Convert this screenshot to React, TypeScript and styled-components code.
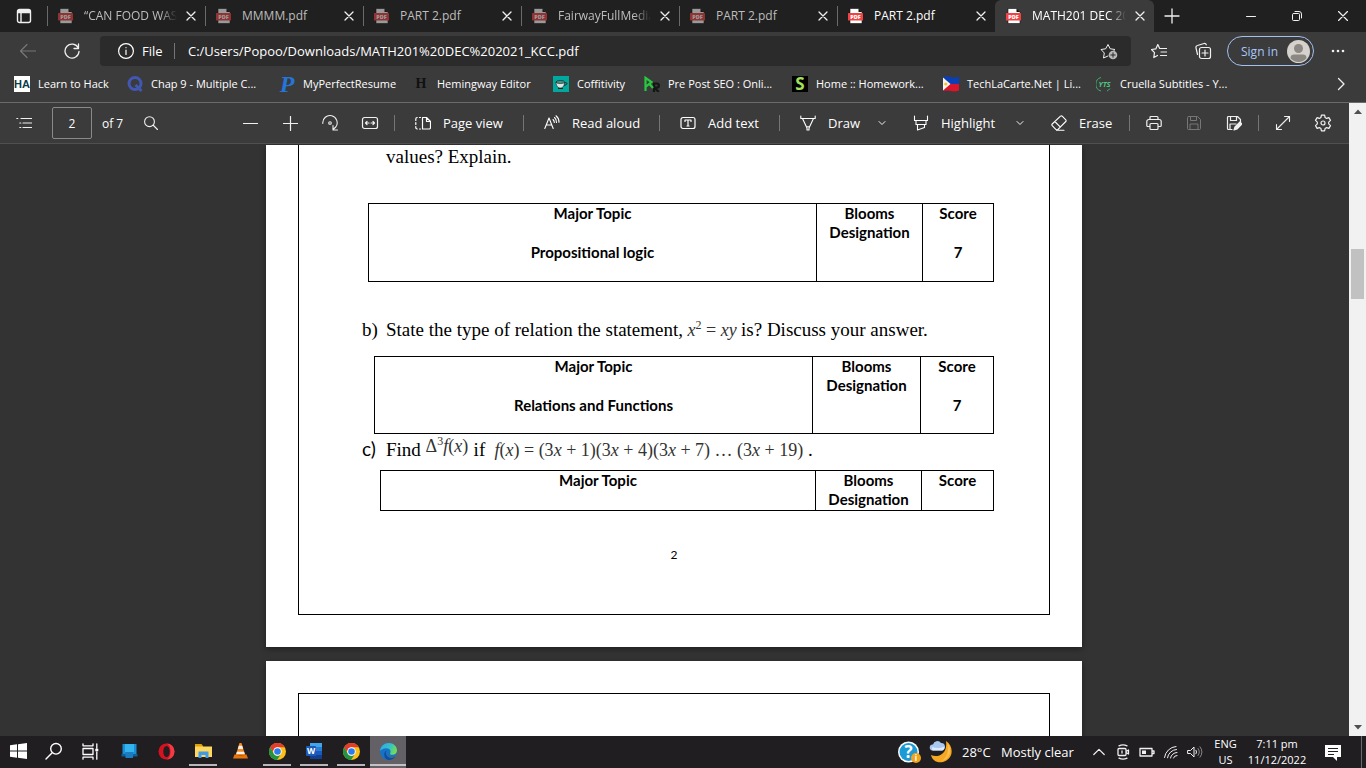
import React from 'react';
import styled, { createGlobalStyle, css } from 'styled-components';

const GlobalStyle = createGlobalStyle`
  * { box-sizing: border-box; }
  html, body, #root { height: 100%; }
  body { margin: 0; overflow: hidden; background: #333; font-family: "Open Sans", sans-serif; color: #fff; }
  button, input { font: inherit; color: inherit; }
  button { border: 0; padding: 0; background: none; }
  a { color: inherit; text-decoration: none; }
  svg { display: block; flex: none; }
`;

/* ---------- layout ---------- */

const Window = styled.div`
  display: flex;
  flex-direction: column;
  height: 100%;
  min-height: 480px;
`;

const TabStrip = styled.header`
  display: flex;
  flex: none;
  height: 32px;
  background: #202020;
`;

const IconButton = styled.button<{ $w?: number; $dim?: boolean }>`
  display: flex;
  flex: none;
  align-items: center;
  justify-content: center;
  width: ${(p) => p.$w ?? 40}px;
  align-self: stretch;
  color: ${(p) => (p.$dim ? '#777' : '#f0f0f0')};
`;

const Tabs = styled.nav`
  display: flex;
  min-width: 0;
`;

const Tab = styled.div<{ $active?: boolean; $bright?: boolean }>`
  display: flex;
  align-items: center;
  flex: 0 1 auto;
  width: ${(p) => (p.$active ? 159 : 158)}px;
  min-width: 0;
  color: ${(p) => (p.$active || p.$bright ? '#fff' : '#bdbdbd')};
  ${(p) => p.$active && css`
    background: #3b3b3b;
    border-radius: 6px 6px 0 0;
  `}
`;

const TabEdge = styled.span<{ $hidden?: boolean }>`
  flex: none;
  width: 1px;
  height: 20px;
  margin-right: 10px;
  background: ${(p) => (p.$hidden ? 'transparent' : '#6a6a6a')};
`;

const Favicon = styled.span<{ $faded?: boolean }>`
  flex: none;
  margin-right: 10px;
  opacity: ${(p) => (p.$faded ? 0.55 : 1)};
`;

const TabTitle = styled.span<{ $fade?: boolean }>`
  flex: 1;
  min-width: 0;
  overflow: hidden;
  white-space: nowrap;
  font-size: 12px;
  line-height: 18px;
  ${(p) => p.$fade && css`
    mask-image: linear-gradient(to right, #000 82%, transparent);
  `}
`;

const WindowControls = styled.div`
  display: flex;
  margin-left: auto;
`;

const AddressRow = styled.div`
  display: flex;
  align-items: center;
  flex: none;
  gap: 4px;
  height: 38px;
  padding: 0 8px;
  background: #3b3b3b;
`;

const AddressField = styled.div`
  display: flex;
  align-items: center;
  flex: 1;
  min-width: 0;
  height: 30px;
  margin: 0 4px;
  padding: 0 2px 0 18px;
  border-radius: 4px;
  background: #2b2b2b;
  font-size: 13px;
`;

const Scheme = styled.label`
  flex: none;
  width: 32px;
  margin-left: 8px;
  line-height: 18px;
`;

const UrlInput = styled.input`
  flex: 1;
  min-width: 0;
  height: 18px;
  margin-right: 8px;
  padding: 0 0 0 13px;
  border: 0;
  background: none;
  outline: 0;
`;

const Rule = styled.span<{ $m?: number }>`
  flex: none;
  width: 1px;
  height: 16px;
  margin: 0 ${(p) => p.$m ?? 0}px;
  background: #757575;
`;

const SignIn = styled.button`
  display: flex;
  align-items: center;
  justify-content: space-between;
  flex: none;
  width: 87px;
  height: 30px;
  padding: 0 3px 0 13px;
  border: 1px solid #a3c1f0;
  border-radius: 15px;
  color: #a8c7fa;
  font-size: 12px;
`;

const Bookmarks = styled.nav`
  display: flex;
  align-items: center;
  flex: none;
  height: 33px;
  padding: 0 5px 4px 14px;
  border-bottom: 1px solid #6b6b6b;
  background: #3b3b3b;
`;

const Bookmark = styled.a<{ $w: number }>`
  display: flex;
  align-items: center;
  gap: 8px;
  flex: 0 1 ${(p) => p.$w}px;
  min-width: 0;
  overflow: hidden;
  white-space: nowrap;
  font-size: 11px;
  line-height: 16px;
`;

const More = styled.div`
  display: flex;
  margin-left: auto;
  height: 28px;
`;

const Content = styled.div`
  display: flex;
  flex: 1;
  min-height: 0;
`;

const Reader = styled.div`
  display: flex;
  flex-direction: column;
  flex: 1;
  min-width: 0;
`;

const PdfBar = styled.div`
  display: flex;
  align-items: center;
  flex: none;
  height: 41px;
  padding-left: 4px;
  border-bottom: 1px solid #4f4f4f;
  background: #3b3b3b;
  font-size: 13px;
`;

const PageBox = styled.input`
  width: 40px;
  height: 32px;
  margin: 0 10px 0 8px;
  padding: 0;
  border: 1px solid #8a8a8a;
  border-radius: 2px;
  background: transparent;
  text-align: center;
  font-size: 12px;
`;

const PageTotal = styled.label`
  width: 29px;
  white-space: nowrap;
  font-size: 12px;
`;

const Gap = styled.span`
  flex: 0 1 59px;
`;

const Tool = styled.button<{ $w: number; $split?: boolean }>`
  display: flex;
  align-items: center;
  flex: none;
  gap: 12px;
  height: 32px;
  padding: 0 ${(p) => (p.$split ? 8 : 14)}px 0 16px;
  white-space: nowrap;
  text-align: left;

  span { width: ${(p) => p.$w}px; }
`;

const Viewer = styled.main`
  flex: 1;
  min-height: 0;
  overflow: hidden;
  padding-right: 1px;
  background: #333;
  color: #000;
`;

const Sheet = styled.article<{ $next?: boolean }>`
  width: 100%;
  max-width: 816px;
  margin: 0 auto 14px;
  padding: ${(p) => (p.$next ? '32px' : '0')} 32px 32px;
  background: #fff;
  box-shadow: 0 2px 6px rgba(0, 0, 0, 0.4);
`;

const Frame = styled.div<{ $next?: boolean }>`
  padding-bottom: 49px;
  border: 1px solid #000;
  ${(p) => (p.$next ? css`min-height: 960px;` : css`border-top: 0;`)}
`;

const Para = styled.p<{ $top: number }>`
  display: flex;
  align-items: baseline;
  height: 24px;
  margin: ${(p) => p.$top}px 0 0;
  padding-left: 63px;
  white-space: pre;
  font: 19px/24px "Liberation Serif", serif;
`;

const Marker = styled.span<{ $sans?: boolean }>`
  flex: none;
  width: 24px;
  ${(p) => p.$sans && css`font-family: Lato, sans-serif;`}
`;

const Formula = styled.span<{ $w: number; $size: number; $raised?: boolean }>`
  flex: none;
  width: ${(p) => p.$w}px;
  color: #333;
  font-size: ${(p) => p.$size}px;
  ${(p) => p.$raised && css`
    position: relative;
    bottom: 4px;
  `}

  sup { font-size: 12px; line-height: 0; }
`;

const Grid = styled.table<{ $top: number; $left: number }>`
  width: calc(100% - ${(p) => p.$left + 55}px);
  margin: ${(p) => p.$top}px 55px 0 ${(p) => p.$left}px;
  border-collapse: collapse;
  border: 1px solid #000;
  table-layout: fixed;
  font: bold 15px/19px Lato, sans-serif;

  th, td {
    padding: 0;
    border-left: 1px solid #000;
    text-align: center;
    vertical-align: top;
    font-weight: bold;
  }
  th { padding-bottom: 1px; }
  td { height: 38px; }
`;

const Col = styled.col<{ $w?: number }>`
  width: ${(p) => (p.$w ? `${p.$w}px` : 'auto')};
`;

const PageNumber = styled.p`
  margin: 34px 0 0;
  text-align: center;
  font: 12px/20px Lato, sans-serif;
`;

const ScrollBar = styled.div`
  display: flex;
  flex-direction: column;
  align-items: center;
  flex: none;
  width: 17px;
  background: #f1f1f1;
`;

const Arrow = styled.span<{ $down?: boolean }>`
  display: grid;
  place-items: center;
  height: 17px;
  ${(p) => p.$down && css`margin-top: auto; transform: rotate(180deg);`}
`;

const Thumb = styled.div`
  width: 13px;
  height: 50px;
  margin-top: 129px;
  background: #c1c1c1;
`;

const TaskBar = styled.footer`
  display: flex;
  flex: none;
  height: 32px;
  background: #211e22;
`;

const Pinned = styled.div`
  display: flex;
  gap: 1px;
  margin-left: 3px;
`;

const TaskButton = styled.button<{ $open?: boolean; $active?: boolean }>`
  display: flex;
  align-items: center;
  justify-content: center;
  width: 36px;
  height: 32px;
  padding-bottom: 2px;
  color: #fff;
  ${(p) => p.$open && css`
    background: linear-gradient(#b9b5ba, #b9b5ba) center bottom 2px / 28px 2px no-repeat;
  `}
  ${(p) => p.$active && css`
    background: linear-gradient(#c4c0c5, #c4c0c5) center bottom 2px / 36px 2px no-repeat, #636066;
  `}
`;

const Tray = styled.div`
  display: flex;
  align-items: center;
  margin-left: auto;
`;

const Weather = styled.button`
  display: flex;
  align-items: center;
  height: 32px;
  font-size: 13px;
  white-space: nowrap;
  text-align: left;
`;

const Temp = styled.span`
  width: 39px;
  margin-left: 9px;
`;

const Sky = styled.span`
  width: 86px;
`;

const TwoLines = styled.button<{ $w: number }>`
  width: ${(p) => p.$w}px;
  text-align: center;
  font-size: 11px;
  line-height: 16px;
  white-space: nowrap;
`;

const ShowDesktop = styled.button`
  width: 5px;
  height: 32px;
  margin-left: 5px;
  border-left: 1px solid #6d6a6e;
`;

/* ---------- icons ---------- */

type IconProps = { d: string; size?: number; sw?: number; children?: React.ReactNode };

const Icon = ({ d, size = 16, sw = 1, children }: IconProps) => (
  <svg width={size} height={size} viewBox={`0 0 ${size} ${size}`} fill="none" stroke="currentColor" strokeWidth={sw} strokeLinecap="round" strokeLinejoin="round" aria-hidden="true">
    <path d={d} />
    {children}
  </svg>
);

const CloseX = () => <Icon size={10} sw={1.3} d="M1 1l8 8M9 1L1 9" />;
const ChevronDown = () => <Icon size={8} d="M1 2.5l3 3 3-3" />;

const PdfIcon = () => (
  <svg width="16" height="16" viewBox="0 0 16 16" aria-hidden="true">
    <path d="M2 .5h8.5L14 4v11.5H2z" fill="#fff" stroke="#111" strokeWidth=".6" />
    <path d="M10.5.5V4H14z" fill="#111" />
    <rect x="0" y="5" width="15" height="7.5" rx=".6" fill="#f04343" />
    <text x="7.5" y="10.8" textAnchor="middle" fontFamily="Open Sans" fontWeight="800" fontSize="5.5" fill="#fff">PDF</text>
  </svg>
);

type GlyphProps = { text: string; bg?: string; color: string; font?: string; size: number; italic?: boolean; y?: number };

const Glyph = ({ text, bg, color, font = 'Open Sans', size, italic, y = 12 }: GlyphProps) => (
  <svg width="16" height="16" viewBox="0 0 16 16" overflow="visible" aria-hidden="true">
    {bg && <rect width="16" height="16" fill={bg} />}
    <text x="8" y={y} textAnchor="middle" fontFamily={font} fontWeight="bold" fontStyle={italic ? 'italic' : 'normal'} fontSize={size} fill={color}>{text}</text>
  </svg>
);

const QuizIcon = () => (
  <svg width="16" height="16" viewBox="0 0 16 16" fill="none" stroke="#4257b2" strokeWidth="3" aria-hidden="true">
    <circle cx="8" cy="7.5" r="6" />
    <path d="M8.500 9l6 6" />
  </svg>
);

const CupIcon = () => (
  <svg width="16" height="16" viewBox="0 0 16 16" aria-hidden="true">
    <rect width="16" height="16" fill="#00a99d" />
    <path d="M3 6c0 4 2 6 4.500 6s4-2.500 4.200-6z" fill="#d9e8e6" stroke="#222" strokeWidth=".7" />
    <ellipse cx="7.300" cy="6" rx="4.300" ry="1.400" fill="#3aa79b" stroke="#222" strokeWidth=".8" />
    <path d="M11.500 7c2-1 3 .5 2 1.400-.6.7-1.600.8-2.400.8M5 12.500h5" fill="none" stroke="#222" />
  </svg>
);

const SeoIcon = () => (
  <svg width="16" height="16" viewBox="0 0 16 16" fill="none" strokeWidth="2.2" aria-hidden="true">
    <path d="M1.500 15V1.800L7.500 6 2 10.500" stroke="#27c93f" />
    <path d="M10 16V7.500h2.800a2 2 0 010 4.200H10.500l4.300 4.300" stroke="#151515" />
    <path d="M5.500 8l3.500 4" stroke="#27c93f" />
  </svg>
);

const FlagIcon = () => (
  <svg width="16" height="16" viewBox="0 0 16 16" aria-hidden="true">
    <path d="M0 1q4-1.500 8 0t8-.5V8H0z" fill="#0b3fb5" />
    <path d="M0 8h16v6.500q-4 1.500-8 .5t-8 0z" fill="#d9142b" />
    <path d="M0 1.500L7.500 8 0 14.500z" fill="#f5f5f5" />
    <circle cx="2.800" cy="8" r="1.600" fill="#f6c318" />
  </svg>
);

const YtsIcon = () => (
  <svg width="16" height="16" viewBox="0 0 16 16" aria-hidden="true">
    <path d="M5 1.500A7 7 0 005 15M11 15a7 7 0 003-2.500" fill="none" stroke="#3fae6a" />
    <text x="8.500" y="10.500" textAnchor="middle" fontFamily="Open Sans" fontWeight="bold" fontStyle="italic" fontSize="7.500" fill="#4fc47e">YTS</text>
  </svg>
);

const Avatar = () => (
  <svg width="23" height="23" viewBox="0 0 23 23" aria-hidden="true">
    <circle cx="11.500" cy="11.500" r="11.500" fill="#d5d1cd" />
    <circle cx="11.500" cy="8.500" r="4.500" fill="#8b8783" />
    <path d="M3.500 18.200c0-2.600 1.500-3.700 3.500-3.700h9c2 0 3.500 1.100 3.500 3.700a10.500 10.500 0 01-16 0z" fill="#8b8783" />
  </svg>
);

const ChromeIcon = () => (
  <svg width="17" height="17" viewBox="0 0 16 16" aria-hidden="true">
    <circle cx="8" cy="8" r="8" fill="#fbc116" />
    <path d="M1.070 4A8 8 0 0114.930 4H8a4 4 0 00-3.460 6z" fill="#e33b2e" />
    <path d="M1.070 4a8 8 0 006.530 12l3.860-6A4 4 0 014.540 10z" fill="#229342" />
    <circle cx="8" cy="8" r="4" fill="#fff" />
    <circle cx="8" cy="8" r="3.100" fill="#2a7cf0" />
  </svg>
);

const EdgeIcon = () => (
  <svg width="17" height="17" viewBox="0 0 16 16" aria-hidden="true">
    <defs>
      <linearGradient id="edgeTop" x1="0" y1="0" x2="1" y2=".4">
        <stop offset="0" stopColor="#2fa7e8" />
        <stop offset=".6" stopColor="#35c1c9" />
        <stop offset="1" stopColor="#6ddc5a" />
      </linearGradient>
    </defs>
    <circle cx="8" cy="8" r="8" fill="#1673c7" />
    <path d="M0 7.500C.5 3 4 0 8.200 0 12.800 0 16 3.200 16 7c0 2.600-2 4-4.200 4-1.700 0-2.500-.6-2.300-1.200.9-1.100.7-4.800-3.500-4.800C3 5 .8 6.500 0 7.500z" fill="url(#edgeTop)" />
    <path d="M6.500 6.800C5 8 5 12.500 9 13.800c2 .6 4 .2 5.500-.8-1.500 2.300-4.600 3.400-7.300 2.800C3 14.500 3 8 6.500 6.800z" fill="#0f4f9e" />
    <path d="M7.500 7.500c-1.500 2 .5 5 4 5 1.700 0 3-.5 3.800-1.200L16 13l-3 0c-4 1.500-7.500-2.500-5.500-5.500z" fill="#636066" />
  </svg>
);

const WordIcon = () => (
  <svg width="17" height="16" viewBox="0 0 17 16" aria-hidden="true">
    <path d="M4 0h12v4H4z" fill="#41a5ee" />
    <path d="M4 4h12v4H4z" fill="#2b7cd3" />
    <path d="M4 8h12v4H4z" fill="#185abd" />
    <path d="M4 12h12v4H4z" fill="#103f91" />
    <rect y="3" width="10" height="10" rx=".8" fill="#1c5ab8" />
    <text x="5" y="11" textAnchor="middle" fontFamily="Open Sans" fontWeight="bold" fontSize="8.500" fill="#fff">W</text>
  </svg>
);

const FolderIcon = () => (
  <svg width="17" height="16" viewBox="0 0 17 16" aria-hidden="true">
    <path d="M0 1h6.500L8 3v3H0z" fill="#e0a100" />
    <path d="M0 3.500h17V14H0z" fill="#ffd75e" />
    <path d="M3.500 15V8.500h10V15h-3v-3h-4v3z" fill="#3f9be8" />
  </svg>
);

const VlcIcon = () => (
  <svg width="15" height="16" viewBox="0 0 15 16" aria-hidden="true">
    <path d="M6.500 0h2l3.800 12.500H2.700z" fill="#f58a1f" />
    <path d="M5.800 2.800h3.400l1 3.200H4.800zM3.900 8.800h7.200l.7 2.200H3.200z" fill="#f1f1f1" />
    <path d="M1.500 11.500h1.200c1 1.500 8.600 1.500 9.600 0h1.200L15 15.500H0z" fill="#e8740c" />
  </svg>
);

const OperaIcon = () => (
  <svg width="17" height="17" viewBox="0 0 17 17" aria-hidden="true">
    <ellipse cx="8.500" cy="8.500" rx="8" ry="8" fill="#d3131f" />
    <path d="M8.500.5a8 8 0 010 16c3-1 4-4.500 4-8s-1-7-4-8z" fill="#f23b45" />
    <ellipse cx="8.500" cy="8.500" rx="3.200" ry="5.500" fill="#211e22" />
  </svg>
);

const PcIcon = () => (
  <svg width="17" height="16" viewBox="0 0 17 16" aria-hidden="true">
    <path d="M1.500 1h14v11h-14z" fill="#1a8fd6" />
    <path d="M4 1h9v8H4z" fill="#35b3ee" />
    <path d="M.5 11h5v2.500h-5zM11.500 11h5v2.500h-5z" fill="#0f5f9c" />
    <path d="M4.500 9h7.500v6H4.500z" fill="#1b7cc0" />
  </svg>
);

const HelpIcon = () => (
  <svg width="23" height="23" viewBox="0 0 23 23" aria-hidden="true">
    <circle cx="10.500" cy="11" r="10.500" fill="#fff" />
    <circle cx="10.500" cy="11" r="9" fill="#1b9ad6" />
    <text x="10.500" y="17" textAnchor="middle" fontFamily="Open Sans" fontWeight="bold" fontSize="17" fill="#fff">?</text>
    <circle cx="18" cy="17" r="5" fill="#f2a31b" />
    <text x="18" y="20" textAnchor="middle" fontFamily="Open Sans" fontWeight="bold" fontSize="8" fill="#fff">i</text>
  </svg>
);

const MoonIcon = () => (
  <svg width="24" height="24" viewBox="0 0 24 24" aria-hidden="true">
    <path d="M17 1c8 5 8 18-3 21C8 23.500 3 20 2 15c6 3 17 0 15-14z" fill="#f7a823" />
    <path d="M18.500 3c5 6 3 16-6 18 5-3 8-9 6-18z" fill="#ffc04d" />
    <path d="M3.500 10.500a3 3 0 01.5-6 4.500 4.500 0 018-1.500 3.800 3.800 0 011 7.500z" fill="#a9c8f0" />
    <path d="M3.500 10.500a3 3 0 010-3.500c3 1.500 7 1.500 12-.5 0 2-1 4-2.500 4z" fill="#dfeafa" />
  </svg>
);

const StartIcon = () => (
  <svg width="17" height="16" viewBox="0 0 17 16" fill="#fff" aria-hidden="true">
    <path d="M0 2.300l7-1v6.200H0zM8 1.200L17 0v7.500H8zM0 8.500h7v6.200l-7-1zM8 8.500h9V16l-9-1.200z" />
  </svg>
);

/* ---------- data ---------- */

const tabs = [
  { title: '“CAN FOOD WAST', fade: true },
  { title: 'MMMM.pdf' },
  { title: 'PART 2.pdf' },
  { title: 'FairwayFullMedia', fade: true },
  { title: 'PART 2.pdf' },
  { title: 'PART 2.pdf', bright: true },
  { title: 'MATH201 DEC 20', fade: true, active: true },
];

const bookmarks = [
  { label: 'Learn to Hack', w: 113, icon: <Glyph text="HA" bg="#fff" color="#0b3c49" size={11} font="Liberation Sans" /> },
  { label: 'Chap 9 - Multiple C...', w: 152, icon: <QuizIcon /> },
  { label: 'MyPerfectResume', w: 134, icon: <Glyph text="P" color="#2376d8" size={24} font="Liberation Serif" italic y={16} /> },
  { label: 'Hemingway Editor', w: 140, icon: <Glyph text="H" color="#111" size={14} font="Liberation Serif" y={12} /> },
  { label: 'Coffitivity', w: 91, icon: <CupIcon /> },
  { label: 'Pre Post SEO : Onli...', w: 148, icon: <SeoIcon /> },
  { label: 'Home :: Homework...', w: 151, icon: <Glyph text="S" bg="#000" color="#a4e05a" size={17} y={14} /> },
  { label: 'TechLaCarte.Net | Li...', w: 153, icon: <FlagIcon /> },
  { label: 'Cruella Subtitles - Y...', w: 153, icon: <YtsIcon /> },
];

const TopicTable = ({ top, left, cols, topic, score }: { top: number; left: number; cols: [number, number]; topic?: string; score?: string }) => (
  <Grid $top={top} $left={left}>
    <colgroup>
      <Col />
      <Col $w={cols[0]} />
      <Col $w={cols[1]} />
    </colgroup>
    <thead>
      <tr>
        <th scope="col">Major Topic</th>
        <th scope="col">Blooms<br />Designation</th>
        <th scope="col">Score</th>
      </tr>
    </thead>
    {topic && (
      <tbody>
        <tr>
          <td>{topic}</td>
          <td />
          <td>{score}</td>
        </tr>
      </tbody>
    )}
  </Grid>
);

export default function App() {
  return (
    <Window>
      <GlobalStyle />
      <TabStrip>
        <IconButton $w={47} aria-label="Tab actions">
          <Icon sw={1.4} d="M3.500 1.500h9a2 2 0 012 2v9a2 2 0 01-2 2h-9a2 2 0 01-2-2v-9a2 2 0 012-2zM2 4.500h12M5 5v9"><path d="M2.500 3h11" strokeWidth="2" /></Icon>
        </IconButton>
        <Tabs>
          {tabs.map((t, i) => (
            <Tab key={i} $active={t.active} $bright={t.bright}>
              <TabEdge $hidden={t.active} />
              <Favicon $faded={!t.active && !t.bright}><PdfIcon /></Favicon>
              <TabTitle $fade={t.fade}>{t.title}</TabTitle>
              <IconButton $w={28} aria-label="Close tab"><CloseX /></IconButton>
            </Tab>
          ))}
        </Tabs>
        <IconButton $w={36} aria-label="New tab"><Icon sw={1.3} d="M8 1v14M1 8h14" /></IconButton>
        <WindowControls>
          <IconButton $w={46} aria-label="Minimize"><Icon size={10} d="M0.500 5.500h9" /></IconButton>
          <IconButton $w={46} aria-label="Restore"><Icon size={10} d="M2 2.500h4.500a1 1 0 011 1V8.500a1 1 0 01-1 1H1.500a1 1 0 01-1-1V3.500a1 1 0 011-1zM3 .5h4a2.500 2.500 0 012.500 2.500v4" /></IconButton>
          <IconButton $w={46} aria-label="Close"><Icon size={10} sw={1.2} d="M0.500 0.500l9 9M9.500 .5l-9 9" /></IconButton>
        </WindowControls>
      </TabStrip>

      <AddressRow>
        <IconButton $dim aria-label="Back"><Icon sw={1.2} d="M15.500 8H.5M7 1.500L.5 8 7 14.500" /></IconButton>
        <IconButton aria-label="Refresh"><Icon sw={1.3} d="M14.300 5A7 7 0 1015 8.500M14.500 1v4.500H10" /></IconButton>
        <AddressField>
          <Icon sw={1.2} d="M8 .6a7.400 7.400 0 110 14.800A7.400 7.400 0 018 .6zM8 7v4.500M8 4.500v.2" />
          <Scheme htmlFor="url">File</Scheme>
          <Rule />
          <UrlInput id="url" defaultValue="C:/Users/Popoo/Downloads/MATH201%20DEC%202021_KCC.pdf" />
          <IconButton aria-label="Add to favorites">
            <Icon size={18} d="M8 14l-4.500 2 .8-5L1 7.500l4.700-.7L8 2.500l2.200 4.300 4.800.7-1.500 1.500">
              <circle cx="13" cy="13" r="4.300" fill="#b8b8b8" stroke="none" />
              <path d="M13 10.800v4.400M10.800 13h4.400" stroke="#2b2b2b" />
            </Icon>
          </IconButton>
        </AddressField>
        <IconButton aria-label="Favorites"><Icon sw={1.2} d="M6.500 12.500l-3.700 2 .7-4.800L.5 6.500l4.300-.6L6.800 1.500l1.900 4H15.500M10 9h5.500M9.500 12.500h6" /></IconButton>
        <IconButton aria-label="Collections"><Icon size={18} sw={1.2} d="M7.500 5.500h7a2 2 0 012 2v7a2 2 0 01-2 2h-7a2 2 0 01-2-2v-7a2 2 0 012-2zM11 8v6M8 11h6M3.500 12.500L2 6a2 2 0 011.500-2.500L10 1.500a2 2 0 012.300 1.300" /></IconButton>
        <SignIn>Sign in<Avatar /></SignIn>
        <IconButton aria-label="Settings and more">
          <svg width="14" height="4" viewBox="0 0 14 4" fill="currentColor" aria-hidden="true"><circle cx="2" cy="2" r="1.300" /><circle cx="7" cy="2" r="1.300" /><circle cx="12" cy="2" r="1.300" /></svg>
        </IconButton>
      </AddressRow>

      <Bookmarks>
        {bookmarks.map((b) => (
          <Bookmark key={b.label} href="#" $w={b.w}>{b.icon}{b.label}</Bookmark>
        ))}
        <More><IconButton aria-label="More favorites"><Icon sw={1.3} d="M5.500 2.500L11 8l-5.500 5.500" /></IconButton></More>
      </Bookmarks>

      <Content>
        <Reader>
          <PdfBar>
            <IconButton aria-label="Contents"><Icon sw={1.2} d="M5 3.500h10.500M7 8h8.500M7 12.500h8.500M.8 3.500h1M3.800 8h1M3.800 12.500h1" /></IconButton>
            <PageBox id="page" defaultValue="2" />
            <PageTotal htmlFor="page">of 7</PageTotal>
            <IconButton aria-label="Search"><Icon size={14} sw={1.1} d="M5.500.8a4.900 4.900 0 110 9.800 4.900 4.900 0 010-9.800zM9 9l4.500 4.500" /></IconButton>
            <Gap />
            <IconButton aria-label="Zoom out"><Icon size={15} sw={1.2} d="M.5 7.500h14" /></IconButton>
            <IconButton aria-label="Zoom in"><Icon size={15} sw={1.2} d="M.5 7.500h14M7.500.5v14" /></IconButton>
            <IconButton aria-label="Rotate">
              <Icon sw={1.1} d="M.8 8.500a7.200 7.200 0 1113 3.500L11 14.500M11 10.500v4.500h4.500"><circle cx="8" cy="8" r="1.300" /></Icon>
            </IconButton>
            <IconButton aria-label="Fit to width"><Icon size={18} sw={1.2} d="M3.500 3.500h11a2 2 0 012 2v7a2 2 0 01-2 2h-11a2 2 0 01-2-2v-7a2 2 0 012-2zM8 9H4.500M6 7.500L4.500 9 6 10.500M10 9h3.500M12 7.500L13.500 9 12 10.500" /></IconButton>
            <Rule $m={4} />
            <Tool $w={62}><Icon sw={1.2} d="M7.500 2.500h4l4 4v6a1.500 1.500 0 01-1.500 1.500H7.500zM11.500 2.500v4h4M4.500 2.500h1M.8 5.500V4A1.500 1.500 0 012.200 2.500M.8 7.500v2M.8 11.500v.8A1.500 1.500 0 002.200 14M4.500 14h1" /><span>Page view</span></Tool>
            <Rule $m={4} />
            <Tool $w={69}><Icon sw={1.1} d="M.8 13.500L5 3l4.200 10.500M2.300 10h5.400M9 4.500a4 4 0 011.300 3M10.500 2.500a6 6 0 012 5M12 .8a8 8 0 013 6.500" /><span>Read aloud</span></Tool>
            <Rule $m={4} />
            <Tool $w={53}><Icon sw={1.2} d="M3 2.500h10a2 2 0 012 2v7a2 2 0 01-2 2H3a2 2 0 01-2-2v-7a2 2 0 012-2zM5 6.500V5h6v1.500M8 5v6M7 11h2" /><span>Add text</span></Tool>
            <Rule $m={4} />
            <Tool $w={31} $split><Icon sw={1.1} d="M.8 1v2.500h14.400V1M2.500 3.500L7 13v2h2v-2l4.500-9.500M6.500 11.800h3" /><span>Draw</span></Tool>
            <IconButton $w={30} aria-label="Draw options"><ChevronDown /></IconButton>
            <Tool $w={56} $split><Icon sw={1.1} d="M1.500 1v4.500h13V1M3 5.500v4h10v-4M4.500 9.500V15l7-2.500v-3" /><span>Highlight</span></Tool>
            <IconButton $w={30} aria-label="Highlight options"><ChevronDown /></IconButton>
            <Tool $w={32}><Icon sw={1.1} d="M9.500 1.200a1.200 1.200 0 011.700 0l3.600 3.600a1.200 1.200 0 010 1.700L7 14.300a1.500 1.500 0 01-2.200 0L1.200 10.700a1.200 1.200 0 010-1.700zM3.800 6.500l5.600 5.600M5.500 15.300H13" /><span>Erase</span></Tool>
            <Rule $m={4} />
            <IconButton aria-label="Print"><Icon sw={1.2} d="M4 4V2.500A1 1 0 015 1.500h6a1 1 0 011 1V4M4 11.500H1.800a1 1 0 01-1-1V6.500a2 2 0 012-2h10.400a2 2 0 012 2v4a1 1 0 01-1 1H12M5 8.500h6a1 1 0 011 1v4a1 1 0 01-1 1H5a1 1 0 01-1-1v-4a1 1 0 011-1z" /></IconButton>
            <IconButton $dim aria-label="Save"><Icon d="M2.500 1.500h9l3 3v9a1 1 0 01-1 1h-11a1 1 0 01-1-1v-11a1 1 0 011-1zM4.500 1.500v4h6v-4M4 14.500V9h8v5.500" /></IconButton>
            <IconButton aria-label="Save as">
              <Icon sw={1.2} d="M6 14.500H2.500a1 1 0 01-1-1v-11a1 1 0 011-1h9l3 3V7M4.500 1.500v4h6v-4M4 14V9h6"><path d="M8 15l1-3 5-5 2 2-5 5z" fill="currentColor" /></Icon>
            </IconButton>
            <Rule $m={4} />
            <IconButton aria-label="Full screen"><Icon sw={1.1} d="M1.500 14.500l13-13M9.500 1.500h5v5M1.500 9.500v5h5" /></IconButton>
            <IconButton aria-label="Settings">
              <Icon size={18} sw={1.2} d="M7.400 1.200h3.200l.5 2.300 1.500.9 2.300-.8 1.600 2.800-1.800 1.700v1.800l1.800 1.700-1.600 2.800-2.300-.8-1.500.9-.5 2.300H7.400l-.5-2.300-1.500-.9-2.300.8-1.600-2.800 1.800-1.700V8.100L1.500 6.400l1.600-2.800 2.300.8 1.500-.9z"><circle cx="9" cy="9" r="2" /></Icon>
            </IconButton>
          </PdfBar>

          <Viewer>
            <Sheet>
              <Frame>
                <Para $top={1}><Marker />values? Explain.</Para>
                <TopicTable top={34} left={69} cols={[106, 71]} topic="Propositional logic" score="7" />
                <Para $top={36}>
                  <Marker>b)</Marker>State the type of relation the statement,
                  <Formula $w={58} $size={18}> <var>x</var><sup>2</sup> = <var>xy</var></Formula>is? Discuss your answer.
                </Para>
                <TopicTable top={14} left={75} cols={[108, 73]} topic="Relations and Functions" score="7" />
                <Para $top={3}>
                  <Marker $sans>c)</Marker>{'Find '}
                  <Formula $w={48} $size={18} $raised>Δ<sup>3</sup><var>f</var>(<var>x</var>)</Formula>{'if '}
                  <Formula $w={318} $size={18}>
                    {' '}<var>f</var>(<var>x</var>) = (3<var>x</var> + 1)(3<var>x</var> + 4)(3<var>x</var> + 7) … (3<var>x</var> + 19)
                  </Formula>.
                </Para>
                <TopicTable top={9} left={81} cols={[106, 72]} />
                <PageNumber>2</PageNumber>
              </Frame>
            </Sheet>
            <Sheet $next>
              <Frame $next />
            </Sheet>
          </Viewer>
        </Reader>
        <ScrollBar>
          <Arrow><svg width="8" height="5" viewBox="0 0 8 5" fill="#505050" aria-hidden="true"><path d="M0 5l4-4.500L8 5z" /></svg></Arrow>
          <Thumb />
          <Arrow $down><svg width="8" height="5" viewBox="0 0 8 5" fill="#505050" aria-hidden="true"><path d="M0 5l4-4.500L8 5z" /></svg></Arrow>
        </ScrollBar>
      </Content>

      <TaskBar>
        <TaskButton aria-label="Start"><StartIcon /></TaskButton>
        <TaskButton aria-label="Search"><Icon size={18} sw={1.4} d="M11 1.500a5.300 5.300 0 110 10.600 5.300 5.300 0 010-10.600zM7.200 10.700L1 17" /></TaskButton>
        <TaskButton aria-label="Task view"><Icon size={17} sw={1.3} d="M1 .8v2h10v-2M1 5.500h10v6H1zM1 16.200v-2h10v2M14.800 .8v4.500M14.800 9v7.200"><path d="M13.300 7h3" strokeWidth="2.500" strokeLinecap="butt" /></Icon></TaskButton>
        <Pinned>
          <TaskButton aria-label="This PC"><PcIcon /></TaskButton>
          <TaskButton aria-label="Opera"><OperaIcon /></TaskButton>
          <TaskButton $open aria-label="Files"><FolderIcon /></TaskButton>
          <TaskButton aria-label="VLC"><VlcIcon /></TaskButton>
          <TaskButton $open aria-label="Chrome"><ChromeIcon /></TaskButton>
          <TaskButton $open aria-label="Word"><WordIcon /></TaskButton>
          <TaskButton $open aria-label="Chrome, second profile"><ChromeIcon /></TaskButton>
          <TaskButton $active aria-label="Edge"><EdgeIcon /></TaskButton>
        </Pinned>
        <Tray>
          <IconButton $w={40} aria-label="Help"><HelpIcon /></IconButton>
          <Weather>
            <MoonIcon />
            <Temp>28°C</Temp>
            <Sky>Mostly clear</Sky>
          </Weather>
          <IconButton $w={24} aria-label="Hidden icons"><Icon size={12} sw={1.2} d="M.8 8.500L6 3.300l5.200 5.200" /></IconButton>
          <IconButton $w={24} aria-label="Meet now"><Icon sw={1.3} d="M4 4.500h6a1 1 0 011 1v5a1 1 0 01-1 1H4a1 1 0 01-1-1v-5a1 1 0 011-1zM11 7.500l2.500-1.500v4L11 8.500M4 1.800q4-2 8 0M4 14.200q4 2 8 0M7 7v2" /></IconButton>
          <IconButton $w={24} aria-label="Battery"><Icon sw={1.3} d="M1 4.500h12v7.500H1zM13.500 7h1.500v2.500h-1.500"><path d="M3 6.500h4v3.500H3z" fill="currentColor" stroke="none" /></Icon></IconButton>
          <IconButton $w={24} aria-label="Network"><Icon d="M1.500 13.500A12.500 12.500 0 0113 2.500M4.500 13.800A9.500 9.500 0 0113.500 5.500M7.500 14A6.500 6.500 0 0114 8.500M10.500 14A3.500 3.500 0 0114 11.500" /></IconButton>
          <IconButton $w={24} aria-label="Volume"><Icon d="M1 6.500h2.500L7 3v10L3.500 9.500H1zM9 6.200q1.300 1.800 0 3.600"><path d="M11 4.500q2.800 3.500 0 7M13 2.800q4 5.200 0 10.400" opacity=".5" /></Icon></IconButton>
          <TwoLines $w={37}>ENG<br />US</TwoLines>
          <TwoLines $w={66}>7:11 pm<br />11/12/2022</TwoLines>
          <IconButton $w={46} aria-label="Notifications">
            <svg width="16" height="17" viewBox="0 0 16 17" aria-hidden="true"><path d="M0 1h16v12h-4v4l-4-4H0z" fill="#fff" /><path d="M3 4.500h10M3 7.500h10M3 10.500h6" stroke="#211e22" /></svg>
          </IconButton>
          <ShowDesktop aria-label="Show desktop" />
        </Tray>
      </TaskBar>
    </Window>
  );
}
